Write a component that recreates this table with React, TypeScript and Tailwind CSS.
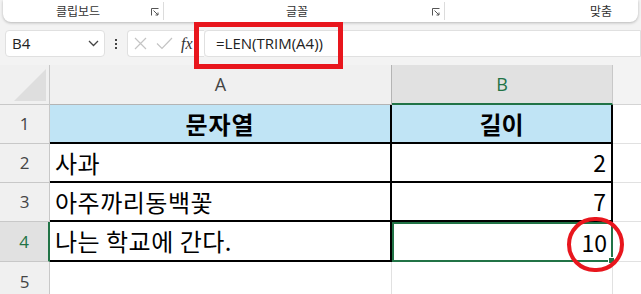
import React from 'react';

const kr = { fontFamily: '"Noto Sans CJK KR", "Noto Sans", sans-serif' };
const ui = { fontFamily: '"Open Sans", "Noto Sans CJK KR", sans-serif' };

const Launcher = () => (
  <svg width="8" height="8" viewBox="0 0 8 8" className="text-[#555]">
    <path d="M0.5 7.5V0.5H7.5" fill="none" stroke="currentColor" strokeWidth="1" />
    <path d="M2.5 2.5L7 7M7 4.5V7H4.5" fill="none" stroke="currentColor" strokeWidth="1" />
  </svg>
);

const rows = [
  { n: '2', a: '사과', b: '2' },
  { n: '3', a: '아주까리동백꽃', b: '7' },
];

const App = () => {
  return (
    <div className="relative w-[641px] h-[294px] overflow-hidden bg-[#f3f3f3]" style={ui}>
      {/* Ribbon group labels */}
      <div className="mx-[3px] h-[22px] bg-white rounded-b-lg shadow-[0_1px_3px_rgba(0,0,0,0.25)] flex text-[12px] text-[#333]" style={kr}>
        <div className="w-[160px] relative flex items-center justify-center pr-[10px]">
          클립보드
          <span className="absolute right-[4px] top-[8px] flex"><Launcher /></span>
        </div>
        <div className="w-px my-[2px] bg-[#dcdcdc]" />
        <div className="w-[280px] relative flex items-center justify-center pr-[14px]">
          글꼴
          <span className="absolute right-[4px] top-[8px] flex"><Launcher /></span>
        </div>
        <div className="w-px my-[2px] bg-[#dcdcdc]" />
        <div className="flex-1 flex items-center justify-end pr-[26px]">맞춤</div>
      </div>

      {/* Formula bar */}
      <div className="mt-[8px] h-[27px] flex items-stretch">
        <div className="ml-[5px] w-[100px] bg-white border border-[#e0e0e0] rounded-[4px] flex items-center justify-between pl-[6px] pr-[5px] text-[15px] text-[#222]">
          <span>B4</span>
          <svg width="11" height="7" viewBox="0 0 11 7"><path d="M1 1L5.5 5.5L10 1" fill="none" stroke="#444" strokeWidth="1.3" /></svg>
        </div>
        <div className="w-[22px] flex flex-col items-center justify-center gap-[2px]">
          <span className="w-[2px] h-[2px] bg-[#444]" />
          <span className="w-[2px] h-[2px] bg-[#444]" />
          <span className="w-[2px] h-[2px] bg-[#444]" />
        </div>
        <div className="w-[77px] bg-white border border-[#e0e0e0] border-r-0 rounded-l-[4px] flex items-center pl-[6px] gap-[9px]">
          <svg width="13" height="13" viewBox="0 0 13 13"><path d="M1 1L12 12M12 1L1 12" stroke="#c4c4c4" strokeWidth="1.2" /></svg>
          <svg width="17" height="13" viewBox="0 0 17 13"><path d="M1 6.5L6 11.5L16 1" fill="none" stroke="#c4c4c4" strokeWidth="1.2" /></svg>
          <span className="italic text-[16px] text-[#333] -ml-[1px]" style={{ fontFamily: '"Liberation Serif", serif' }}>fx</span>
        </div>
        <div className="flex-1 bg-white border border-[#e0e0e0] rounded-l-[4px] flex items-center pl-[11px] text-[15px] text-[#222]">
          =LEN(TRIM(A4))
        </div>
      </div>

      {/* Sheet grid */}
      <div className="mt-[8px] grid grid-cols-[50px_342px_221px_1fr] grid-rows-[40px_39px_39px_39px_40px_40px] bg-white" style={kr}>
        <div className="bg-[#f0f0f0] border-r border-b border-[#c8c8c8] flex items-end justify-end p-[3px]">
          <div className="w-0 h-0 border-l-[32px] border-l-transparent border-b-[32px] border-b-[#dedede]" />
        </div>
        <div className="bg-[#f0f0f0] border-r border-b border-[#b4b4b4] flex items-center justify-center text-[18px] text-[#444]" style={ui}>A</div>
        <div className="bg-[#e1e1e1] border-r border-[#c8c8c8] border-b-2 border-b-[#217346] flex items-center justify-center text-[18px] text-[#217346]" style={ui}>B</div>
        <div className="bg-[#f3f3f3] border-b border-[#d4d4d4]" />

        {/* row 1 */}
        <div className="bg-[#f0f0f0] border-r border-b border-[#c8c8c8] flex items-center justify-center text-[17px] text-[#444]" style={ui}>1</div>
        <div className="bg-[#c0e4f5] border-r-2 border-b-2 border-black flex items-center justify-center text-[24px] font-bold text-black tracking-[1px]">문자열</div>
        <div className="bg-[#c0e4f5] border-r-2 border-b-2 border-black flex items-center justify-center text-[24px] font-bold text-black">길이</div>
        <div className="border-b border-[#e1e1e1]" />

        {rows.map((r) => (
          <React.Fragment key={r.n}>
            <div className="bg-[#f0f0f0] border-r border-b border-[#c8c8c8] flex items-center justify-center text-[17px] text-[#444]" style={ui}>{r.n}</div>
            <div className="border-r-2 border-b-2 border-black flex items-center pl-[5px] text-[24px] text-black tracking-[0.5px]">{r.a}</div>
            <div className="border-r-2 border-b-2 border-black flex items-center justify-end pr-[5px] text-[23px] text-black">{r.b}</div>
            <div className="border-b border-[#e1e1e1]" />
          </React.Fragment>
        ))}

        {/* row 4 */}
        <div className="bg-[#e1e1e1] border-r-2 border-r-[#217346] border-b border-[#c8c8c8] flex items-center justify-center text-[17px] text-[#217346]" style={ui}>4</div>
        <div className="border-r-2 border-b-2 border-black flex items-center pl-[5px] text-[24px] text-black tracking-[0.5px]">나는 학교에 간다.</div>
        <div className="border-2 border-[#217346] flex items-center justify-end pr-[4px] text-[23px] text-black">10</div>
        <div className="border-b border-[#e1e1e1]" />

        {/* row 5 */}
        <div className="bg-[#f0f0f0] border-r border-[#c8c8c8] flex items-center justify-center text-[17px] text-[#444]" style={ui}>5</div>
        <div className="border-r border-[#e1e1e1]" />
        <div className="border-r border-[#e1e1e1]" />
        <div />
      </div>

      {/* fill handle */}
      <div className="absolute left-[608px] top-[257px] w-[7px] h-[7px] bg-[#217346] border border-white" />

      {/* red annotations */}
      <div className="absolute left-[194px] top-[22px] w-[149px] h-[47px] border-[5px] border-[#e8161d]" />
      <div className="absolute left-[567px] top-[217px] w-[57px] h-[55px] rounded-full border-[4px] border-[#e8161d]" />
    </div>
  );
};

export default App;
